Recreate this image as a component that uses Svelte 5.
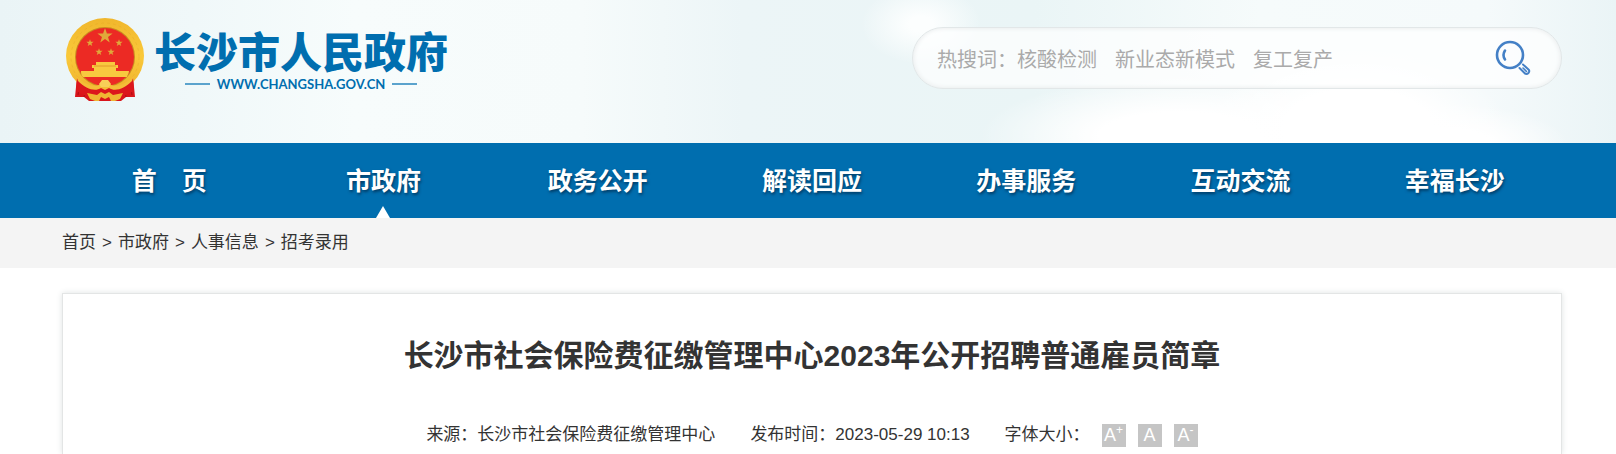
<script lang="ts">
  const hotWords = ["核酸检测", "新业态新模式", "复工复产"];

  const navItems = ["首　页", "市政府", "政务公开", "解读回应", "办事服务", "互动交流", "幸福长沙"];
  const current = "市政府";

  const crumbs = ["首页", "市政府", "人事信息", "招考录用"];

  const sizes = [
    { sign: "+", label: "放大字体" },
    { sign: "", label: "默认字体" },
    { sign: "-", label: "缩小字体" },
  ];

  const star = "0,-10 2.4,-3.1 9.5,-3.1 3.8,1.2 5.9,8.1 0,3.9 -5.9,8.1 -3.8,1.2 -9.5,-3.1 -2.4,-3.1";
  const stars = [
    { x: 39, y: 18, s: 0.8 },
    { x: 24, y: 25, s: 0.38 },
    { x: 53, y: 25, s: 0.38 },
    { x: 33, y: 34, s: 0.38 },
    { x: 45, y: 34, s: 0.38 },
  ];
</script>

<div class="page">
  <header class="top">
    <a class="logo" href="#home">
      <svg class="emblem" viewBox="0 0 78 83" aria-hidden="true">
        <defs>
          <linearGradient id="gold" x1="0" y1="0" x2="0" y2="1">
            <stop offset="0" stop-color="#f0b62c" />
            <stop offset="0.5" stop-color="#fac93a" />
            <stop offset="1" stop-color="#edb02a" />
          </linearGradient>
        </defs>
        <path d="M11 59 L67 59 L69 79 L60 79 L55 83 L23 83 L18 79 L9 79Z" fill="#d9151b" />
        <path d="M14 64 L12 77 M20 68 L18 79 M64 64 L66 77 M58 68 L60 79" stroke="#a80d12" stroke-width="1" />
        <ellipse cx="39" cy="38" rx="39" ry="38" fill="url(#gold)" />
        <circle cx="39" cy="39" r="34" fill="none" stroke="#dd9a22" stroke-width="1" stroke-dasharray="3 3" opacity="0.3" />
        <circle cx="39" cy="39" r="30" fill="#c98a20" />
        <circle cx="39" cy="39" r="29" fill="#ec2a24" />
        {#each stars as st}
          <polygon points={star} transform="translate({st.x} {st.y}) scale({st.s})" fill="#e0a83a" />
        {/each}
        <path
          d="M30 44 H49 V47 H52 V50 H50 V53 H63 C63 56 61 57 61 59 H17 C15 57 15 55 15 53 H28 V50 H26 V47 H30Z"
          fill="#f8c93f"
        />
        <path d="M28 48 H50" stroke="#e29a28" stroke-width="1" />
        <path d="M11 60 C18 67 25 69 32 68 L46 68 C53 69 60 67 67 60 L68 73 L56 79 H22 L10 73Z" fill="#dc171c" />
        <path d="M10 57 C18 67 27 69 33 67 L36 65 L39 67 L42 65 L45 67 C51 69 60 67 68 57 L66 63 C58 71 49 74 43 70 L39 72 L35 70 C29 74 20 71 12 63Z" fill="#f4bd38" />
        <path d="M33 66 L36 62 L42 62 L45 66 L43 69 H35Z" fill="#f8cf58" />
        <path d="M21 75 L31 77 L35 74 L39 76 L43 74 L47 77 L57 75 L54 81 L49 83 H29 L24 81Z" fill="#efb733" />
        <path d="M33 83 L35 79 L39 81 L43 79 L45 83Z" fill="#d9151b" />
      </svg>
      <span class="wordmark">
        <strong>长沙市人民政府</strong>
        <span class="domain">WWW.CHANGSHA.GOV.CN</span>
      </span>
    </a>

    <form class="search" role="search">
      <label for="keyword">热搜词：</label>
      {#each hotWords as word}
        <a href="#search">{word}</a>
      {/each}
      <input id="keyword" type="text" />
      <button type="submit" aria-label="搜索">
        <svg viewBox="0 0 36 36" fill="none" stroke="#4480c6" stroke-linecap="round" aria-hidden="true">
          <circle cx="15" cy="15" r="13" stroke-width="2.6" />
          <path d="M10 10.5 Q7 15 10 19.5" stroke-width="2.6" />
          <path d="M24.5 28 L29.5 33 Q31.5 35 33.5 33 Q35 31 33.5 29.5 L28 24.5" stroke-width="2" />
          <path d="M28 28 L31.5 31.5" stroke-width="1.6" />
        </svg>
      </button>
    </form>
  </header>

  <nav>
    {#each navItems as item}
      <a href="#nav" class:active={item === current}>{item}</a>
    {/each}
  </nav>

  <div class="crumbs">
    {#each crumbs as crumb, i}
      {#if i > 0}<span>&gt;</span>{/if}
      <a href="#crumb">{crumb}</a>
    {/each}
  </div>

  <article>
    <h1>长沙市社会保险费征缴管理中心2023年公开招聘普通雇员简章</h1>
    <div class="meta">
      <span>来源：长沙市社会保险费征缴管理中心</span>
      <span>发布时间：2023-05-29 10:13</span>
      <div class="sizes">
        <span>字体大小：</span>
        {#each sizes as size}
          <button type="button" aria-label={size.label}>A{#if size.sign}<sup>{size.sign}</sup>{/if}</button>
        {/each}
      </div>
    </div>
  </article>
</div>

<style>
  :global(body) {
    margin: 0;
    background: #fff;
    color: #333;
    font-family: "Liberation Sans", "Noto Sans CJK SC", sans-serif;
    font-size: 17px;
  }
  a {
    color: inherit;
    text-decoration: none;
  }
  button {
    border: 0;
    padding: 0;
    font-family: inherit;
    cursor: pointer;
  }
  .page {
    display: flex;
    flex-direction: column;
    min-height: 100vh;
  }
  .top,
  nav,
  .crumbs {
    box-sizing: border-box;
    padding: 0 54px 0 62px;
  }
  .top {
    display: flex;
    justify-content: space-between;
    align-items: flex-start;
    height: 143px;
    background:
      radial-gradient(ellipse 200px 60px at 73% 95%, #fff 40%, transparent),
      radial-gradient(ellipse 150px 80px at 84% 90%, #fff 50%, transparent),
      radial-gradient(ellipse 130px 40px at 89% 100%, #fff 40%, transparent),
      radial-gradient(ellipse 60px 40px at 57% 17%, #fcfefe 20%, transparent),
      linear-gradient(90deg, #eaf4f6 0%, #f0f8f9 12%, #f7fcfc 22%, #f6fbfb 36%, #ecf5f7 46%, #eaf5f6 64%, #f6fbfb 78%, #f5fafb 92%, #eaf4f6 100%);
  }
  .logo {
    display: flex;
    gap: 10px;
    padding: 18px 0 0 4px;
  }
  .emblem {
    width: 78px;
    height: 83px;
  }
  .wordmark {
    display: flex;
    flex-direction: column;
    align-items: center;
    padding-top: 8px;
    color: #006eaf;
  }
  .wordmark strong {
    font-family: "Noto Sans CJK SC", sans-serif;
    font-size: 42px;
    font-weight: 900;
    line-height: 48px;
  }
  .domain {
    display: flex;
    align-items: center;
    gap: 7px;
    font-family: Lato, sans-serif;
    font-size: 13px;
    font-weight: 700;
    line-height: 20px;
  }
  .domain::before,
  .domain::after {
    content: "";
    width: 25px;
    height: 2px;
    background: #5ba3cd;
  }
  .search {
    box-sizing: border-box;
    display: flex;
    align-items: center;
    width: 650px;
    height: 62px;
    margin-top: 27px;
    padding: 0 30px 0 24px;
    border: 1px solid #e2e7e8;
    border-radius: 31px;
    background: rgba(255, 255, 255, 0.7);
    box-shadow: inset 0 0 5px #e6e9ea;
    color: #aaa;
    font-size: 20px;
    white-space: nowrap;
  }
  .search a {
    margin-right: 18px;
  }
  .search input {
    flex: 1;
    min-width: 0;
    border: 0;
    outline: 0;
    background: none;
    font-size: 20px;
  }
  .search button {
    width: 36px;
    height: 36px;
    background: none;
  }
  .search svg {
    display: block;
  }
  nav {
    display: flex;
    height: 75px;
    background: #006eaf;
  }
  nav a {
    position: relative;
    flex: 1;
    color: #fff;
    font-size: 25px;
    font-weight: 700;
    line-height: 77px;
    text-align: center;
    text-shadow: 1px 2px 3px #003c66;
  }
  nav a.active::after {
    content: "";
    position: absolute;
    bottom: 0;
    left: 50%;
    margin-left: -7px;
    border: 7px solid transparent;
    border-top: 0;
    border-bottom: 12px solid #fff;
  }
  .crumbs {
    display: flex;
    align-items: baseline;
    gap: 6px;
    height: 50px;
    background: #f4f4f4;
    line-height: 50px;
  }
  article {
    flex: 1;
    margin: 25px 54px 0 62px;
    padding: 39px 20px 0;
    border: 1px solid #e3e5e5;
    border-bottom: 0;
    box-shadow: 0 0 6px #dfe3e3;
  }
  h1 {
    margin: 0;
    font-size: 30px;
    line-height: 46px;
    text-align: center;
  }
  .meta {
    display: flex;
    justify-content: center;
    align-items: center;
    gap: 35px;
    margin-top: 43px;
    line-height: 26px;
  }
  .sizes {
    display: flex;
    align-items: center;
    gap: 12px;
  }
  .sizes button {
    width: 24px;
    height: 23px;
    background: #c5c5c5;
    color: #fff;
    font-size: 18px;
    line-height: 23px;
  }
  sup {
    font-size: 12px;
    line-height: 0;
  }
</style>
